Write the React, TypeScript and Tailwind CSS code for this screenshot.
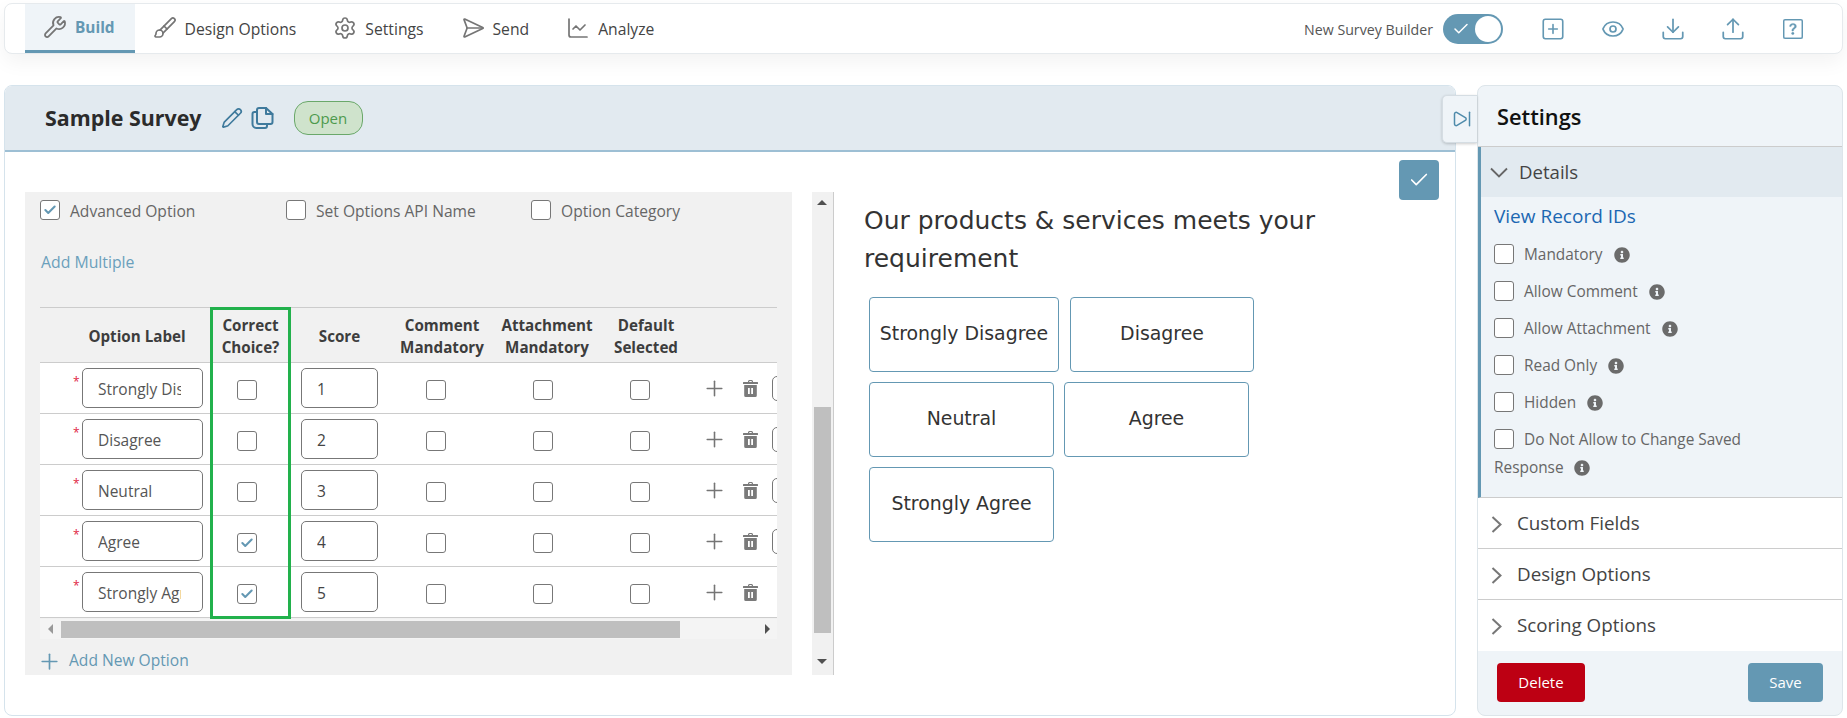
import { Brush, Check, ChartLine, Download, Eye, Pencil, Plus, SendHorizontal, Settings, SkipForward, SquarePlus, Upload, Wrench } from "lucide-react";
import { BsQuestionSquare } from "react-icons/bs";
import { FaInfoCircle } from "react-icons/fa";

const options = [
  { label: "Strongly Disagree", score: "1", correct: false },
  { label: "Disagree", score: "2", correct: false },
  { label: "Neutral", score: "3", correct: false },
  { label: "Agree", score: "4", correct: true },
  { label: "Strongly Agree", score: "5", correct: true },
];

const tabs = [
  { name: "Design Options", icon: Brush },
  { name: "Settings", icon: Settings },
  { name: "Send", icon: SendHorizontal },
  { name: "Analyze", icon: ChartLine },
];

const settingRows = ["Mandatory", "Allow Comment", "Allow Attachment", "Read Only", "Hidden"];

const tableCols = "grid-cols-[170px_81px_97px_108px_102px_96px_83px]";

function Box({ checked }: { checked?: boolean }) {
  return (
    <span className="flex h-5 w-5 shrink-0 items-center justify-center rounded-[3px] border border-[#777] bg-white">
      {checked && <Check size={14} strokeWidth={3.5} className="text-[#6498b3]" />}
    </span>
  );
}

function TrashIcon() {
  return (
    <svg width="15" height="17" viewBox="0 0 15 17" className="text-[#7a7a7a]">
      <path fill="currentColor" d="M5 1.6C5 .7 5.700 0 6.600 0h1.800C9.300 0 10 .7 10 1.600V2h4.500a.5.5 0 0 1 .5.5V4H0V2.500A.5.5 0 0 1 .5 2H5zM6.200 2h2.600v-.5a.4.4 0 0 0-.4-.4H6.600a.4.4 0 0 0-.4.4z" />
      <path fill="currentColor" fillRule="evenodd" d="M1.200 5h12.600v10.500a1.500 1.500 0 0 1-1.500 1.500H2.700a1.500 1.500 0 0 1-1.500-1.500zM5 8v6h1.800V8zM8.200 8v6H10V8z" />
    </svg>
  );
}

function CopyIcon() {
  return (
    <svg width="23" height="22" viewBox="0 0 23 22" fill="none" stroke="#3f7a9c" strokeWidth="2" strokeLinejoin="round" strokeLinecap="round">
      <path d="M8 1h7l6.500 6v8a2 2 0 0 1-2 2H8a2 2 0 0 1-2-2V3a2 2 0 0 1 2-2z" />
      <path d="M15 1v6h6.500" />
      <path d="M6 5H3.500a2 2 0 0 0-2 2v10a4 4 0 0 0 4 4H14a2 2 0 0 0 2-2v-2" />
    </svg>
  );
}

function ChevronDownIcon() {
  return (
    <svg width="18" height="11" viewBox="0 0 18 11" fill="none" stroke="#666" strokeWidth="1.800" className="shrink-0">
      <path d="M1 1.500l8 8 8-8" />
    </svg>
  );
}

function ChevronRightIcon() {
  return (
    <svg width="12" height="17" viewBox="0 0 12 17" fill="none" stroke="#777" strokeWidth="2" className="mt-[2px] shrink-0">
      <path d="M1.500 1l8 7.500-8 7.500" />
    </svg>
  );
}

function OptionRow({ label, score, correct, last }: { label: string; score: string; correct: boolean; last: boolean }) {
  return (
    <div className={`grid h-[51px] ${tableCols} border-b border-[#ccc] bg-white`}>
      <div className="flex items-center pl-[33px]">
        <span className="mb-[13px] w-[9px] text-[12px] leading-none text-[#e0243f]">*</span>
        <input
          readOnly
          value={label}
          className="h-10 w-[121px] rounded-[5px] border border-[#777] bg-white pl-[15px] pr-[21px] pt-[1px] text-[15.500px] text-[#555] outline-none"
        />
      </div>
      <div className="flex items-center justify-center pr-[8px] pt-[4px]"><Box checked={correct} /></div>
      <div className="flex items-center pl-[10px]">
        <input readOnly value={score} className="h-10 w-[77px] rounded-[5px] border border-[#777] bg-white pl-[15px] pt-[1px] text-[15.500px] text-[#444] outline-none" />
      </div>
      <div className="flex items-center justify-center pr-[12px] pt-[4px]"><Box /></div>
      <div className="flex items-center justify-center pr-[8px] pt-[4px]"><Box /></div>
      <div className="flex items-center justify-center pr-[12px] pt-[4px]"><Box /></div>
      <div className="flex items-center overflow-hidden pl-[8px]">
        <Plus size={25} strokeWidth={1.500} className="shrink-0 text-[#757575]" />
        <span className="ml-[16px] shrink-0"><TrashIcon /></span>
        {!last && <span className="ml-[14px] h-[25px] w-[30px] shrink-0 rounded-[5px] border border-[#777]" />}
      </div>
    </div>
  );
}

function OptionsPanel() {
  return (
    <div className="h-[483px] w-[767px] shrink-0 bg-[#f1f1f1] pl-[15px] pt-[8px]">
      <div className="flex h-5 items-center text-[15.600px] text-[#666]">
        <Box checked />
        <span className="ml-[10px] w-[216px] pt-[3px]">Advanced Option</span>
        <Box />
        <span className="ml-[10px] w-[215px] pt-[3px]">Set Options API Name</span>
        <Box />
        <span className="ml-[10px] pt-[3px]">Option Category</span>
      </div>
      <div className="mt-[32px] flex h-[22px] items-center pl-[1px] text-[15.800px] text-[#6ba0bc]">Add Multiple</div>
      <div className="mt-[33px] w-[737px]">
        <div className="relative">
          <div className={`grid h-[56px] ${tableCols} items-center border-y border-[#ccc] pt-[1px] text-center text-[15.200px] font-bold leading-[22px] text-[#3d3d3d]`}>
            <span className="pl-[24px]">Option Label</span>
            <span>Correct<br />Choice?</span>
            <span>Score</span>
            <span>Comment<br />Mandatory</span>
            <span>Attachment<br />Mandatory</span>
            <span>Default<br />Selected</span>
            <span />
          </div>
          {options.map((o, i) => (
            <OptionRow key={o.label} label={o.label} score={o.score} correct={o.correct} last={i === options.length - 1} />
          ))}
          {/* highlight drawn over the column */}
          <div className="absolute bottom-[-1px] left-[170px] top-0 w-[81px] border-[3px] border-[#22b14c]" />
        </div>
        <div className="mt-[1px] flex h-[20px] items-center bg-[#f4f4f4]">
          <span className="ml-[8px] h-0 w-0 border-y-[5px] border-r-[5px] border-y-transparent border-r-[#999]" />
          <span className="ml-[8px] h-[17px] w-[619px] bg-[#bfbfbf]" />
          <span className="ml-[85px] h-0 w-0 border-y-[5px] border-l-[5px] border-y-transparent border-l-[#505050]" />
        </div>
        <div className="mt-[10px] flex h-6 items-center text-[15.600px] text-[#6498b3]">
          <Plus size={25} strokeWidth={1.600} className="-ml-[3px]" />
          <span className="ml-[7px]">Add New Option</span>
        </div>
      </div>
    </div>
  );
}

function VerticalScroll() {
  return (
    <div className="ml-[20px] flex h-[483px] w-[22px] shrink-0 flex-col items-center border-r border-[#ccc] bg-[#f1f1f1] pr-[1px]">
      <span className="mt-[8px] h-0 w-0 border-x-[5px] border-b-[5px] border-x-transparent border-b-[#505050]" />
      <span className="mt-[202px] h-[226px] w-[17px] bg-[#bfbfbf]" />
      <span className="mt-[26px] h-0 w-0 border-x-[5px] border-t-[5px] border-x-transparent border-t-[#505050]" />
    </div>
  );
}

function Preview() {
  const card = "flex h-[75px] items-center justify-center rounded-[4px] border border-[#6498b3] pb-[3px] text-[18.900px] text-[#333]";
  return (
    <div className="flex-1 pl-[30px] font-['DejaVu_Sans',sans-serif]">
      <p className="w-[500px] pt-[10px] text-[25px] leading-[38px] text-[#333]">
        Our products &amp; services meets your requirement
      </p>
      <div className="ml-[5px] mt-[19px] flex flex-col gap-[10px]">
        <div className="flex gap-[11px]">
          <div className={`${card} w-[190px]`}>Strongly Disagree</div>
          <div className={`${card} w-[184px]`}>Disagree</div>
        </div>
        <div className="flex gap-[10px]">
          <div className={`${card} w-[185px]`}>Neutral</div>
          <div className={`${card} w-[185px]`}>Agree</div>
        </div>
        <div className={`${card} w-[185px]`}>Strongly Agree</div>
      </div>
    </div>
  );
}

function SettingsPanel() {
  return (
    <aside className="relative flex w-[366px] shrink-0 flex-col rounded-[8px] border border-[#dde5ea] bg-[#eff4f8]">
      <div className="absolute left-[-36px] top-[9px] flex h-[48px] w-[35px] items-center justify-center rounded-l-[5px] border border-r-0 border-[#d5dde3] bg-[#eff4f8] shadow-[0_1px_3px_rgba(0,0,0,0.2)]">
        <SkipForward size={20} strokeWidth={1.800} className="ml-[3px] text-[#4f8bab]" />
      </div>
      <div className="flex h-[61px] items-center border-b border-[#ccc] pl-[19px] pt-[3px] text-[21.800px] font-semibold text-[#111]">Settings</div>
      <div className="h-[351px] border-l-[3px] border-b border-b-[#ccc] border-l-[#6498b3]">
        <div className="flex h-[50px] items-center bg-[#e2eaf0] pl-[9px] text-[18.600px] text-[#444]">
          <ChevronDownIcon />
          <span className="ml-[11px]">Details</span>
        </div>
        <div className="pl-[13px] text-[15.400px] text-[#666]">
          <div className="flex h-[38px] items-center text-[19px] text-[#1b67b2]">View Record IDs</div>
          <div className="mt-[9px] flex flex-col gap-[17px]">
            {settingRows.map((name) => (
              <div key={name} className="flex h-5 items-center">
                <Box />
                <span className="ml-[10px] pt-[2px]">{name}</span>
                <FaInfoCircle size={16} className="ml-[11px] mt-[2px] text-[#6b6b6b]" />
              </div>
            ))}
            <div>
              <div className="flex h-5 items-center">
                <Box />
                <span className="ml-[10px] pt-[2px]">Do Not Allow to Change Saved</span>
              </div>
              <div className="mt-[7px] flex items-center">
                <span>Response</span>
                <FaInfoCircle size={16} className="ml-[10px] text-[#6b6b6b]" />
              </div>
            </div>
          </div>
        </div>
      </div>
      {["Custom Fields", "Design Options", "Scoring Options"].map((name, i) => (
        <div key={name} className={`flex h-[51px] items-center bg-white pl-[13px] text-[18.800px] text-[#444] ${i < 2 ? "border-b border-[#ccc]" : ""}`}>
          <ChevronRightIcon />
          <span className="ml-[14px]">{name}</span>
        </div>
      ))}
      <div className="flex flex-1 items-center justify-between px-[19px] pb-[1px] text-[15px] text-white">
        <button className="h-[39px] w-[88px] rounded-[4px] bg-[#bd0013]">Delete</button>
        <button className="h-[39px] w-[75px] rounded-[4px] bg-[#6498b3]">Save</button>
      </div>
    </aside>
  );
}

export default function App() {
  return (
    <main className="h-[718px] overflow-hidden bg-white px-[4px] pt-[3px] font-['Open_Sans',sans-serif]">
      <header className="flex h-[51px] items-center rounded-[8px] border border-[#e6eaed] bg-white pl-[20px] pr-[19px] shadow-[0_8px_20px_rgba(0,0,0,0.05)]">
        <div className="flex h-full items-center border-b-[3px] border-[#6498b3] bg-[#eff4f8] pl-[18px] pr-[20px] text-[15.400px] font-bold text-[#6498b3]">
          <Wrench size={24} strokeWidth={1.800} className="text-[#757575]" />
          <span className="ml-[8px] pt-[2px]">Build</span>
        </div>
        {tabs.map((t, i) => {
          const Icon = t.icon;
          return (
            <div key={t.name} className={`flex items-center text-[15.700px] text-[#444] ${i === 0 ? "ml-[18px]" : "ml-[37px]"}`}>
              <Icon size={24} strokeWidth={1.700} className="text-[#757575]" />
              <span className="ml-[8px] pt-[2px]">{t.name}</span>
            </div>
          );
        })}
        <div className="ml-auto flex items-center">
          <span className="pt-[2px] text-[14.200px] text-[#555]">New Survey Builder</span>
          <div className="ml-[10px] flex h-[30px] w-[60px] items-center justify-between rounded-full bg-[#6498b3] pl-[9px] pr-[2px]">
            <Check size={18} strokeWidth={2} className="text-white" />
            <span className="h-[26px] w-[26px] rounded-full bg-white" />
          </div>
          <div className="ml-[20px] flex items-center text-[#6498b3]">
            <span className="flex w-[60px] justify-center"><SquarePlus size={26} strokeWidth={1.500} /></span>
            <span className="flex w-[60px] justify-center"><Eye size={24} strokeWidth={1.700} /></span>
            <span className="flex w-[60px] justify-center"><Download size={26} strokeWidth={1.600} /></span>
            <span className="flex w-[60px] justify-center"><Upload size={26} strokeWidth={1.600} /></span>
            <span className="flex w-[60px] justify-center"><BsQuestionSquare size={20} stroke="currentColor" strokeWidth={0.3} /></span>
          </div>
        </div>
      </header>
      <div className="mt-[31px] flex h-[631px] gap-[21px]">
        <section className="flex w-[1452px] shrink-0 flex-col overflow-hidden rounded-[8px] border border-[#d5e3ec]">
          <div className="flex h-[66px] shrink-0 items-center border-b-2 border-[#9dbfd4] bg-[#e2eaf0] pl-[40px]">
            <h1 className="text-[21.400px] font-bold text-[#2b2b2b]">Sample Survey</h1>
            <Pencil size={22} strokeWidth={1.800} className="ml-[19px] text-[#3f7a9c]" />
            <span className="ml-[8px]"><CopyIcon /></span>
            <span className="ml-[20px] flex h-[34px] w-[69px] items-center justify-center rounded-[14px] border border-[#6aa86a] bg-[#cfe3cc] text-[15px] font-medium text-[#4d9a4d]">Open</span>
          </div>
          <div className="relative flex flex-1 pl-[20px] pt-[40px]">
            <OptionsPanel />
            <VerticalScroll />
            <Preview />
            <button className="absolute right-[16px] top-[8px] flex h-10 w-10 items-center justify-center rounded-[4px] bg-[#6498b3]">
              <Check size={22} strokeWidth={1.800} className="text-white" />
            </button>
          </div>
        </section>
        <SettingsPanel />
      </div>
    </main>
  );
}
